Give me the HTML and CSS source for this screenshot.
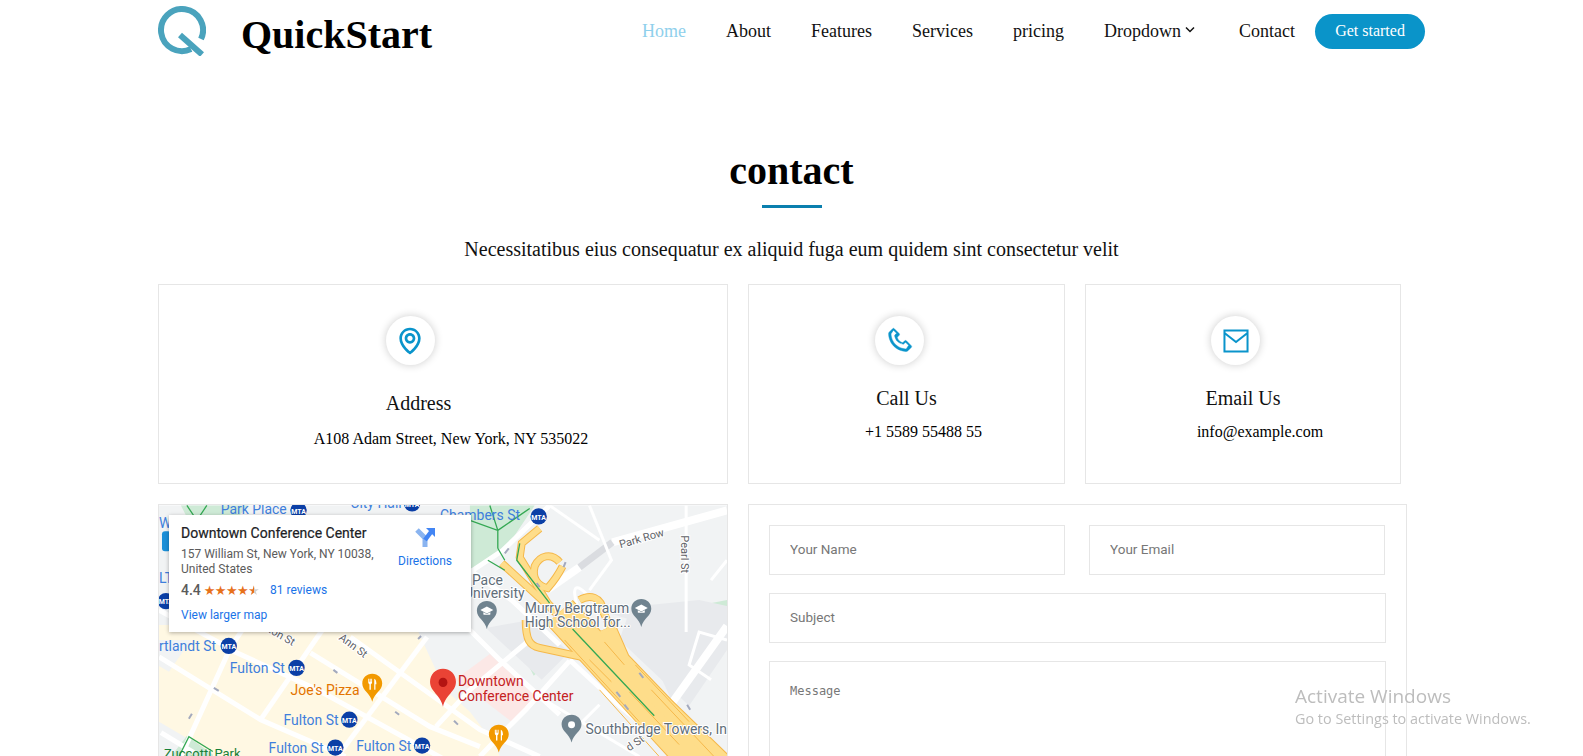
FILE: index.html
```html
<!DOCTYPE html>
<html lang="en">
<head>
<meta charset="utf-8">
<title>QuickStart</title>
<link rel="stylesheet" href="styles.css">
</head>
<body>
<header class="site-header">
  <a class="brand" href="#">
    <svg class="brand-mark" viewBox="0 0 48 50" width="48" height="50"><path d="M33 43A21 21 0 1 1 43 33" fill="none" stroke="#4aa3bd" stroke-width="6"/><path d="M22 29 44 48.500" fill="none" stroke="#4aa3bd" stroke-width="6"/></svg>
    <span class="brand-name">QuickStart</span>
  </a>
  <nav class="nav">
    <a class="nav-link active" href="#">Home</a>
    <a class="nav-link" href="#">About</a>
    <a class="nav-link" href="#">Features</a>
    <a class="nav-link" href="#">Services</a>
    <a class="nav-link" href="#">pricing</a>
    <a class="nav-link nav-drop" href="#">Dropdown<svg class="chev" viewBox="0 0 14 8" width="14" height="8"><path d="M3 1.500 7 5.500 11 1.500" fill="none" stroke="#111" stroke-width="1.500"/></svg></a>
    <a class="nav-link" href="#">Contact</a>
    <a class="cta" href="#">Get started</a>
  </nav>
</header>

<section class="section-title">
  <h2>contact</h2>
  <div class="title-rule"></div>
  <p>Necessitatibus eius consequatur ex aliquid fuga eum quidem sint consectetur velit</p>
</section>

<main class="contact">
  <div class="info-row">
    <div class="info-box info-wide">
      <div class="icon-ring ring-address"><svg viewBox="0 0 24 24" width="32" height="32"><path d="M12 14c2.206 0 4-1.794 4-4s-1.794-4-4-4-4 1.794-4 4 1.794 4 4 4zm0-6c1.103 0 2 .897 2 2s-.897 2-2 2-2-.897-2-2 .897-2 2-2z"/><path d="M11.420 21.814a.998.998 0 0 0 1.160 0C12.884 21.599 20.029 16.440 20 10c0-4.411-3.589-8-8-8S4 5.589 4 9.995c-.029 6.445 7.116 11.604 7.420 11.819zM12 4c3.309 0 6 2.691 6 6.005.021 4.438-4.388 8.423-6 9.730-1.611-1.308-6.021-5.294-6-9.735 0-3.309 2.691-6 6-6z"/></svg></div>
      <h3 class="info-title title-address">Address</h3>
      <p class="info-text text-address">A108 Adam Street, New York, NY 535022</p>
    </div>
    <div class="info-box info-call">
      <div class="icon-ring ring-call"><svg class="icon-phone" viewBox="0 0 24 24" width="29" height="29"><path d="M17.707 12.293a.999.999 0 0 0-1.414 0l-1.594 1.594c-.739-.22-2.118-.72-2.992-1.594s-1.374-2.253-1.594-2.992l1.594-1.594a.999.999 0 0 0 0-1.414l-4-4a.999.999 0 0 0-1.414 0L3.581 5.005c-.38.38-.594.902-.586 1.435.023 1.424.4 6.370 4.298 10.268s8.844 4.274 10.269 4.298h.028c.528 0 1.027-.208 1.405-.586l2.712-2.712a.999.999 0 0 0 0-1.414l-4-4.001zm-.127 6.712c-1.248-.021-5.518-.356-8.873-3.712-3.366-3.366-3.692-7.651-3.712-8.874L7 3.414 9.586 6 8.293 7.293a1 1 0 0 0-.272.912c.024.115.611 2.842 2.271 4.502s4.387 2.247 4.502 2.271a.991.991 0 0 0 .912-.271L17 13.414 19.586 16l-2.006 3.005z"/></svg></div>
      <h3 class="info-title">Call Us</h3>
      <p class="info-text text-shift">+1 5589 55488 55</p>
    </div>
    <div class="info-box info-mail">
      <div class="icon-ring ring-mail"><svg viewBox="0 0 24 24" width="32" height="32"><path fill-rule="evenodd" d="M2.600 3.400h18.800v17.200H2.600zM19.900 4.900H4.100v.7l7.900 6.200 7.900-6.200zM4.100 19.100h15.800V7.500L12 13.700 4.100 7.500z"/></svg></div>
      <h3 class="info-title">Email Us</h3>
      <p class="info-text text-shift">info@example.com</p>
    </div>
  </div>

  <div class="lower-row">
    <div class="map">
      <svg class="map-art" viewBox="158 505 570 252" width="568" height="252">
        <defs>
          <g id="mta"><circle r="8.200" fill="#0b3fa6"/><text class="mta-text" text-anchor="middle" y="3.200">MTA</text></g>
          <path id="pin" d="M0-14C-5.800-14-10-9.700-10-4.400-10 3-2 5 0 14 2 5 10 3 10-4.400 10-9.700 5.800-14 0-14z"/>
          <g id="cap"><path d="M0-8.500-6.500-5 0-1.500 6.500-5z" fill="#fff"/><path d="M-3.500-2.800V-.5C-2-.1 2-.1 3.500-.5V-2.800L0-1z" fill="#fff"/></g>
          <g id="fork"><path d="M-4-9v3.500c0 1 .6 1.800 1.200 2V2h1.400V-3.500c.6-.2 1.200-1 1.200-2V-9h-.8v3h-.6v-3h-.8v3h-.6v-3zM2-9C3.800-8.500 4.200-6 4.200-3.500H3.200V2H2z" fill="#fff"/></g>
        </defs>
        <rect x="158" y="505" width="570" height="252" fill="#f1f3f4"/>
        <path d="M158 625H415L445 690 470 712 495 745 500 757H158z" fill="#fff8e3"/>
        <path d="M158 640 190 640 168 672 158 666zM158 722 185 738 176 757H158z" fill="#f1f3f4"/>
        <path d="M180 505H248L232 522 190 525zM470 505H535L505 550 470 572zM692 607 728 600V635L705 640zM690 632 718 626 712 640 700 645z" fill="#ceead6"/>
        <path d="M530 628 552 660 534 676 522 652zM170 757 186 736 212 755 212 757z" fill="#ceead6"/>
        <path d="M490 654 537 698 513 723 470 690 455 680z" fill="#fce8e6"/>
        <path d="M486 628 542 680 570 652 530 620zM600 610 728 650 728 606 700 600zM620 640 690 706 728 650 690 606 632 606z" fill="#e8eaed"/>
        <path d="M645 640 672 700 725 640 690 610z" fill="#e8eaed"/>
        <g class="road">
          <path d="M180 757 230 647 262 600"/><path d="M260 720 317 637 346 596"/><path d="M337 757 427 637"/><path d="M436 727 470 690 530 640"/>
          <path d="M158 657 260 720 345 757"/><path d="M230 650 317 690 450 763"/><path d="M310 653 430 727 480 747"/><path d="M350 637 480 730 540 757"/><path d="M160 733 193 753"/>
          <path d="M158 610 232 650"/><path d="M470 572 503 550 550 505"/><path d="M470 570 512 600 560 645"/><path d="M470 630 500 660 560 715"/>
          <path d="M570 660 620 706 683 757"/><path d="M570 661 527 709 503 733 480 757"/>
        </g>
        <g class="road-wide">
          <path d="M728 510 613 542"/><path d="M580 567 547 590"/><path d="M728 626 673 703"/>
        </g>
        <path d="M613 542 580 567" fill="none" stroke="#dadce0" stroke-width="7"/>
        <g class="road-thin">
          <path d="M687 505V632"/><path d="M590 505 612 560 590 590"/><path d="M600 610C575 575 570 585 580 612"/><path d="M548 702 640 757"/><path d="M600 705 580 725"/><path d="M728 640 700 632 690 665 712 680"/><path d="M728 560 712 580"/><path d="M550 505 600 540"/>
        </g>
        <g class="hw-edge">
          <path class="h-lg" d="M560 612 655 716 700 765"/><path class="h-md" d="M608 628 622 660 668 708 730 768"/><path class="h-sm" d="M540 528 522 543 520 557 548 603 560 616"/><path class="h-sm" d="M502 563 550 607 572 628"/>
          <path class="h-sm" d="M560 562C552 552 540 555 535 566 532 578 538 586 548 588 555 580 560 572 563 566"/><path class="h-sm" d="M526 620C526 640 530 646 540 648L582 657"/><path class="h-sm" d="M580 600C590 594 602 596 604 612L612 630"/>
        </g>
        <g class="hw-fill">
          <path class="h-lg" d="M560 612 655 716 700 765"/><path class="h-md" d="M608 628 622 660 668 708 730 768"/><path class="h-sm" d="M540 528 522 543 520 557 548 603 560 616"/><path class="h-sm" d="M502 563 550 607 572 628"/>
          <path class="h-sm" d="M560 562C552 552 540 555 535 566 532 578 538 586 548 588 555 580 560 572 563 566"/><path class="h-sm" d="M526 620C526 640 530 646 540 648L582 657"/><path class="h-sm" d="M580 600C590 594 602 596 604 612L612 630"/>
        </g>
        <g class="hw-lane"><path d="M590 660 612 682"/><path d="M630 692 680 745"/><path d="M636 665 690 722"/><path d="M605 642 625 665"/><path d="M600 690 660 757"/><path d="M652 690 715 757"/><path d="M565 640 640 722"/></g>
        <g class="rail"><path d="M573 629 655 716"/><path d="M520 543 517 560 550 603"/><path d="M470 520 498 530 498 548M498 530 530 508M498 548 505 560M490 505 498 530"/><path d="M186 505 196 520 206 505M488 560 505 570"/><path d="M178 757 188 737 212 752"/></g>
        <g class="arrow"><path d="M509 548 505 553"/><path d="M566 562 564 567"/><path d="M540 587 537 583"/><path d="M640 673 644 678"/><path d="M617 692 621 697"/><path d="M625 705 629 710"/><path d="M688 705 691 710"/><path d="M188 719 191 714"/><path d="M218 691 213 688"/><path d="M337 673 333 670"/><path d="M399 715 395 712"/><path d="M421 636 418 639"/><path d="M454 721 458 725"/></g>

        <text class="lbl-blue" x="220" y="514">Park Place</text>
        <use href="#mta" x="298" y="510"/>
        <text class="lbl-blue" x="350" y="508">City Hall</text>
        <use href="#mta" x="412" y="503"/>
        <text class="lbl-blue" x="440" y="520">Chambers St</text>
        <use href="#mta" x="539" y="516"/>
        <rect x="161" y="531" width="9" height="20" rx="3" fill="#1a8fd8"/>
        <text class="lbl-blue" x="158" y="528">Wo</text>
        <text class="lbl-blue" x="158" y="583">LT</text>
        <use href="#mta" x="165" y="601"/>
        <text class="lbl-blue" x="158" y="651">rtlandt St</text>
        <use href="#mta" x="228" y="646"/>
        <text class="lbl-blue" x="229" y="673">Fulton St</text>
        <use href="#mta" x="296" y="668"/>
        <text class="lbl-blue" x="283" y="725">Fulton St</text>
        <use href="#mta" x="349" y="720"/>
        <text class="lbl-blue" x="268" y="753">Fulton St</text>
        <use href="#mta" x="335" y="748"/>
        <text class="lbl-blue" x="356" y="751">Fulton St</text>
        <use href="#mta" x="422" y="746"/>
        <text class="lbl-orange" x="290" y="695">Joe's Pizza</text>
        <text class="lbl-green" x="163" y="758">Zuccotti Park</text>
        <text class="lbl-street" transform="translate(338 639) rotate(37)">Ann St</text>
        <text class="lbl-street" transform="translate(262 629) rotate(30)">ston St</text>
        <text class="lbl-street" transform="translate(621 548) rotate(-16)">Park Row</text>
        <text class="lbl-street" transform="translate(682 535) rotate(90)">Pearl St</text>
        <text class="lbl-street" transform="translate(630 752) rotate(-35)">d St</text>
        <text class="lbl-gray" x="472" y="585">Pace</text>
        <text class="lbl-gray" x="464" y="598">University</text>
        <text class="lbl-gray" x="525" y="613">Murry Bergtraum</text>
        <text class="lbl-gray" x="525" y="627">High School for...</text>
        <text class="lbl-gray" x="586" y="734">Southbridge Towers, Inc</text>
        <text class="lbl-red" x="458" y="686">Downtown</text>
        <text class="lbl-red" x="458" y="701">Conference Center</text>
        <g transform="translate(487 615)"><use href="#pin" fill="#70838f"/><use href="#cap"/></g>
        <g transform="translate(642 613)"><use href="#pin" fill="#70838f"/><use href="#cap"/></g>
        <g transform="translate(572 729)"><use href="#pin" fill="#70838f"/><circle cy="-4" r="3.500" fill="#fff"/></g>
        <g transform="translate(372 688)"><use href="#pin" fill="#f29900"/><use href="#fork"/></g>
        <g transform="translate(499 739)"><use href="#pin" fill="#f29900"/><use href="#fork"/></g>
        <g transform="translate(443 688) scale(1.300 1.360)"><use href="#pin" fill="#ea4335"/><circle cy="-4" r="3.400" fill="#b31412"/></g>
      </svg>
      <div class="place-card">
        <div class="place-main">
          <div class="place-name">Downtown Conference Center</div>
          <div class="place-addr">157 William St, New York, NY 10038, United States</div>
          <div class="place-rating"><span class="score">4.4</span><span class="stars">★★★★<span class="half">★</span></span><a class="place-link reviews" href="#">81 reviews</a></div>
          <a class="place-link larger" href="#">View larger map</a>
        </div>
        <a class="directions" href="#">
          <svg viewBox="0 0 22 22" width="22" height="22"><path d="M11 21V12L3 4" fill="none" stroke="#8ab4f0" stroke-width="5"/><path d="M11 14 17 6" fill="none" stroke="#4285f4" stroke-width="4.500"/><path d="M12 2H21V11z" fill="#4285f4"/></svg>
          <span>Directions</span>
        </a>
      </div>
    </div>
    <form class="message-form">
      <div class="form-row">
        <input class="field half-field" type="text" placeholder="Your Name">
        <input class="field half-field" type="email" placeholder="Your Email">
      </div>
      <input class="field" type="text" placeholder="Subject">
      <textarea class="field message" rows="6" placeholder="Message"></textarea>
    </form>
  </div>
</main>

<aside class="activation">
  <div class="activation-title">Activate Windows</div>
  <div class="activation-sub">Go to Settings to activate Windows.</div>
</aside>
</body>
</html>
```
FILE: styles.css
```css
* { box-sizing: border-box; }
html, body { height: 756px; overflow: hidden; }
body { margin: 0; background: #fff; color: #000; font-family: "Liberation Serif", "Times New Roman", serif; }
a { color: inherit; text-decoration: none; }

.site-header { display: flex; align-items: center; height: 62px; padding: 0 158px; }
.brand { display: flex; align-items: center; gap: 35px; }
.brand-mark { flex: none; }
.brand-name { font-size: 40px; font-weight: 700; line-height: 46px; color: #000; position: relative; top: 4px; }
.nav { display: flex; align-items: center; margin-left: auto; }
.nav-link { font-size: 18px; margin: 0 20px; color: #111; }
.nav-link.active { color: #8fd0ec; }
.nav-drop { display: flex; align-items: center; margin-right: 42px; }
.chev { margin-left: 2px; margin-top: -2px; }
.nav .nav-drop + .nav-link { margin: 0 20px 0 0; }
.cta { width: 110px; height: 35px; border-radius: 18px; background: #0a94c9; color: #fff; font-size: 16px; line-height: 34px; text-align: center; }

.section-title { text-align: center; padding-top: 86px; }
.section-title h2 { margin: 0; font-size: 40px; line-height: 46px; font-weight: 700; color: #000; }
.title-rule { width: 60px; height: 3px; margin: 11px auto 0; background: #0a7fae; }
.section-title p { margin: 30px 0 0; font-size: 20px; line-height: 23px; color: #111; }

.contact { padding: 0 0 0 158px; margin-top: 23px; }
.info-row { display: flex; gap: 20px; }
.info-box { height: 200px; border: 1px solid #e6e6e6; padding-top: 31px; display: flex; flex-direction: column; align-items: center; text-align: center; }
.info-wide { width: 570px; }
.info-call { width: 317px; }
.info-mail { width: 316px; }
.icon-ring { width: 49px; height: 49px; border-radius: 50%; background: #fff; box-shadow: 0 0 8px rgba(0, 0, 0, .2); display: flex; align-items: center; justify-content: center; }
.icon-ring svg { fill: #0a94cb; }
.icon-ring .icon-phone { stroke: #0a94cb; stroke-width: .4; }
.ring-address { margin-right: 66px; }
.ring-call { margin-right: 15px; }
.ring-mail { margin-right: 15px; }
.info-title { margin: 22px 0 0; font-size: 20px; font-weight: 400; line-height: 23px; color: #111; }
.title-address { margin: 27px 49px 0 0; }
.info-text { margin: 13px 0 0; font-size: 16px; line-height: 18px; color: #000; }
.text-address { margin: 15px 0 0 16px; }
.text-shift { margin-left: 34px; }

.lower-row { display: flex; gap: 20px; margin-top: 20px; }
.map { position: relative; width: 570px; height: 300px; border: 1px solid #e6e6e6; overflow: hidden; flex: none; }
.map-art { display: block; }
.map-art text { font-family: Roboto, "Liberation Sans", sans-serif; }
.road path { fill: none; stroke: #fff; stroke-width: 5; }
.road-wide path { fill: none; stroke: #fff; stroke-width: 8; }
.road-thin path { fill: none; stroke: #fff; stroke-width: 3; }
.hw-edge path { fill: none; stroke: #f5b84a; }
.hw-fill path { fill: none; stroke: #fedd8a; }
.hw-edge .h-lg { stroke-width: 36; }
.hw-fill .h-lg { stroke-width: 34; }
.hw-edge .h-md { stroke-width: 18; }
.hw-fill .h-md { stroke-width: 16; }
.hw-edge .h-sm { stroke-width: 8; }
.hw-fill .h-sm { stroke-width: 6; }
.hw-lane path { fill: none; stroke: #f5b84a; stroke-width: 1; }
.rail path { fill: none; stroke: #34a853; stroke-width: 1.3; }
.arrow path { fill: none; stroke: #a3a9bd; stroke-width: 2; }
.mta-text { font-size: 7px; font-weight: 700; fill: #fff; }
.lbl-blue { font-size: 14px; fill: #3f7fdc; }
.lbl-orange { font-size: 14px; fill: #e37400; }
.lbl-green { font-size: 13px; fill: #188038; }
.lbl-red { font-size: 14px; fill: #c5221f; }
.lbl-gray { font-size: 14px; fill: #5f6e7a; paint-order: stroke; stroke: #fff; stroke-width: 2px; }
.lbl-street { font-size: 11px; fill: #5f6368; paint-order: stroke; stroke: #fff; stroke-width: 2px; }

.place-card { position: absolute; left: 10px; top: 10px; width: 302px; height: 117px; background: #fff; box-shadow: 0 1px 4px rgba(0, 0, 0, .3); display: flex; font-family: Roboto, "Liberation Sans", sans-serif; padding: 10px 12px; }
.place-main { width: 200px; flex: none; }
.place-name { font-size: 14px; font-weight: 400; -webkit-text-stroke: .2px #202124; color: #202124; line-height: 16px; white-space: nowrap; }
.place-addr { font-size: 12px; line-height: 15px; color: #5b5b5b; margin-top: 6px; }
.place-rating { display: flex; align-items: center; margin-top: 4px; height: 18px; }
.score { font-size: 14px; color: #5b5b5b; font-weight: 500; }
.stars { font-size: 13px; color: #e7711b; margin-left: 3px; letter-spacing: -.6px; font-family: "DejaVu Sans", sans-serif; }
.half { background: linear-gradient(90deg, #e7711b 55%, #d0d0d0 55%); -webkit-background-clip: text; background-clip: text; color: transparent; }
.place-link { color: #1a73e8; font-size: 12px; }
.reviews { margin-left: 11px; }
.larger { display: block; margin-top: 9px; }
.directions { margin-left: auto; margin-right: 7px; margin-top: 1px; display: flex; flex-direction: column; align-items: center; gap: 6px; color: #1a73e8; font-size: 12px; height: 50px; }

.message-form { width: 659px; height: 300px; border: 1px solid #e6e6e6; padding: 20px; display: flex; flex-direction: column; gap: 18px; flex: none; }
.form-row { display: flex; gap: 24px; }
.field { display: block; flex: none; width: 100%; height: 50px; border: 1px solid #e6e6e6; border-radius: 0; padding: 0 20px 2px; background: transparent; font-family: Roboto, "Liberation Sans", sans-serif; font-size: 13.500px; outline: none; }
.form-row .half-field { width: 296px; }
.field::placeholder { color: #777; opacity: 1; }
.message { height: 200px; padding-top: 22px; font-family: "DejaVu Sans Mono", monospace; font-size: 12px; resize: none; }

.activation { position: fixed; left: 1295px; top: 683px; color: #bdbdbd; font-family: "Open Sans", sans-serif; white-space: nowrap; }
.activation-title { font-size: 19px; line-height: 26px; }
.activation-sub { font-size: 14.400px; line-height: 20px; }
```
